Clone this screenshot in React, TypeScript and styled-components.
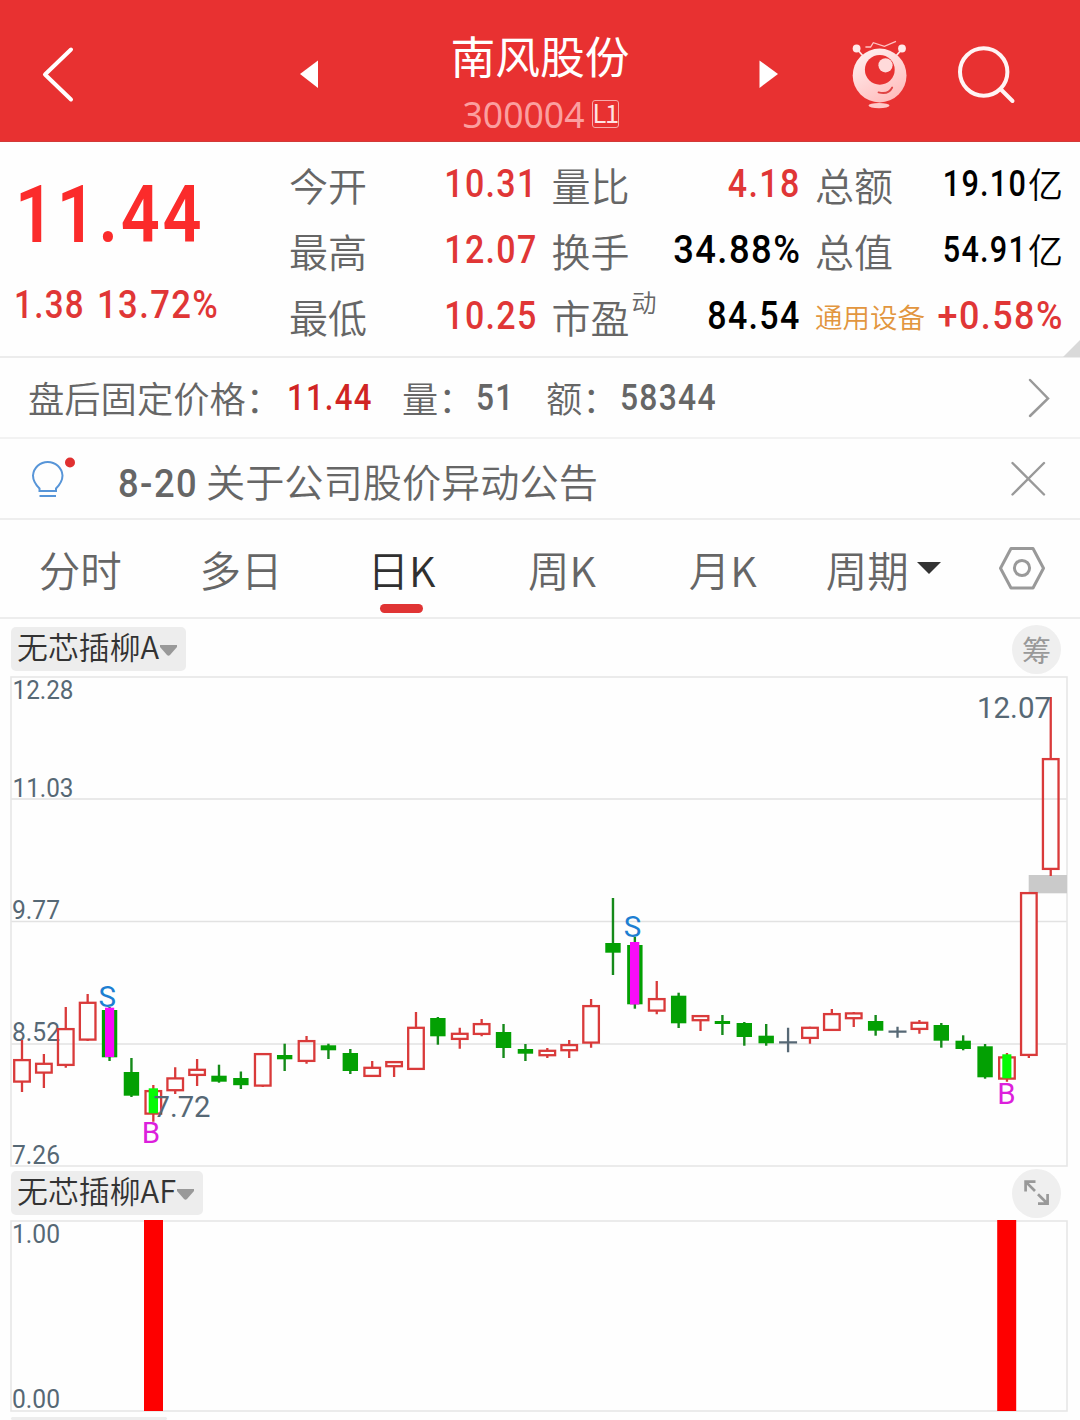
import React from "react";
import styled, { createGlobalStyle } from "styled-components";

const CJK = `"Noto Sans CJK SC", "Noto Sans", sans-serif`;
const DIGITS = `Roboto, "Noto Sans CJK SC", sans-serif`;
const RED = "#e03636";
const GREY = "#666666";
const SLATE = "#566875";

const GlobalStyle = createGlobalStyle`
  * { box-sizing: border-box; }
  body { margin: 0; background: #fff; font-family: ${CJK}; font-weight: 350; }
`;

const Page = styled.main`
  width: 1080px;
  height: 1420px;
  overflow: hidden;
  display: flex;
  flex-direction: column;
  background: #fefefe;
  white-space: nowrap;
`;

/* Condensed digits, squeezed towards one edge */
const Num = styled.span<{ $size: number; $color: string; $end?: boolean; $weight?: number; $k?: number }>`
  display: inline-block;
  font-family: ${DIGITS};
  font-weight: ${(p) => p.$weight ?? 500};
  font-size: ${(p) => p.$size}px;
  line-height: 1;
  letter-spacing: 0.04em;
  margin-right: ${(p) => (p.$end ? "-0.5px" : "0")};
  color: ${(p) => p.$color};
  transform: scaleX(${(p) => p.$k ?? 0.86});
  transform-origin: ${(p) => (p.$end ? "right" : "left")} center;
`;

/* ---------- header ---------- */
const Header = styled.header`
  height: 142px;
  flex: none;
  display: grid;
  grid-template-columns: 290px 500px 290px;
  background: #e83131;
  border-bottom: 1px solid #d23a38;
`;
const HeaderSide = styled.div`
  display: flex;
`;
const HeaderTools = styled.div`
  display: flex;
  align-items: flex-start;
  gap: 44px;
  padding: 36px 0 0 59px;
`;
const TitleArea = styled.div`
  display: flex;
  justify-content: space-between;
`;
const TitleBlock = styled.div`
  display: flex;
  flex-direction: column;
  align-items: center;
`;
const StockName = styled.h1`
  margin: 22px 0 0;
  font-size: 44.8px;
  line-height: 66px;
  font-weight: 400;
  color: #fff;
`;
const CodeLine = styled.div`
  display: flex;
  align-items: center;
  gap: 7px;
  margin: 7px 0 0 1px;
  height: 38px;
  font-family: "Noto Sans", sans-serif;
  font-weight: 400;
  font-size: 35.6px;
  line-height: 38px;
  color: #fb9f9f;
`;
const LevelTag = styled.span`
  width: 27px;
  height: 28px;
  border: 1.5px solid #f7a9a9;
  border-radius: 3px;
  display: flex;
  align-items: center;
  justify-content: center;
  padding-bottom: 5px;
  font-family: "Noto Sans CJK SC", sans-serif;
  font-size: 25.5px;
  line-height: 22px;
  letter-spacing: -1.5px;
  color: #ffe3e3;
`;

/* ---------- quote ---------- */
const Quote = styled.section`
  height: 216px;
  flex: none;
  position: relative;
  display: flex;
  border-bottom: 2px solid #ececec;
`;
const PriceBlock = styled.div`
  width: 289px;
  display: flex;
  flex-direction: column;
`;
const BigPrice = styled.div`
  height: 80px;
  padding-left: 15px;
  margin-top: 33px;
`;
const Change = styled.div`
  display: grid;
  grid-template-columns: 83px 1fr;
  padding-left: 14px;
  margin-top: 31px;
`;
const Stats = styled.div`
  width: 774px;
  padding-top: 9px;
  display: grid;
  grid-template-columns: 248px 249px 248px;
  grid-auto-rows: 66px;
  column-gap: 14.5px;
`;
const Stat = styled.div`
  display: flex;
  justify-content: space-between;
  align-items: center;
`;
const StatLabel = styled.span<{ $sector?: boolean }>`
  display: flex;
  margin-top: -1px;
  font-size: ${(p) => (p.$sector ? 27.5 : 39)}px;
  line-height: 60px;
  color: ${(p) => (p.$sector ? "#e2963f" : GREY)};
`;
const Dynamic = styled.sup`
  font-size: 25px;
  line-height: 30px;
  margin-left: 2px;
`;
const Amount = styled.span`
  display: flex;
  align-items: center;
  color: #000;
`;
const Unit = styled.span`
  margin-left: 1px;
  font-size: 35px;
  line-height: 50px;
  margin-top: -3px;
`;
const Corner = styled.svg`
  position: absolute;
  right: 0;
  bottom: -1px;
`;

/* ---------- info rows ---------- */
const Row = styled.section<{ $h: number; $line?: string }>`
  height: ${(p) => p.$h}px;
  flex: none;
  display: flex;
  align-items: center;
  border-bottom: 2px solid ${(p) => p.$line ?? "#f2f2f2"};
`;
const Slot = styled.span<{ $w: number; $drop?: number }>`
  width: ${(p) => p.$w}px;
  padding-top: ${(p) => p.$drop ?? 0}px;
  display: flex;
`;
const RowText = styled.span<{ $size: number; $w?: number; $shift?: number }>`
  width: ${(p) => (p.$w ? `${p.$w}px` : "auto")};
  flex: ${(p) => (p.$w ? "none" : "1")};
  margin-top: ${(p) => p.$shift ?? 0}px;
  font-size: ${(p) => p.$size}px;
  line-height: 60px;
  color: ${GREY};
`;

/* ---------- tabs ---------- */
const Tabs = styled.nav`
  height: 99px;
  flex: none;
  display: grid;
  grid-template-columns: repeat(6, 160.6px) 1fr;
  border-bottom: 2px solid #ededed;
`;
const Tab = styled.div<{ $active?: boolean }>`
  position: relative;
  display: flex;
  align-items: center;
  justify-content: center;
  gap: 8px;
  padding-top: 1px;
  font-size: 41.5px;
  line-height: 60px;
  color: ${(p) => (p.$active ? "#303030" : GREY)};
  > svg { margin-top: -3px; }
`;
const Underline = styled.i`
  position: absolute;
  left: 59px;
  bottom: 4px;
  width: 43px;
  height: 9px;
  border-radius: 5px;
  background: #e03434;
`;

/* ---------- charts ---------- */
const ChartBar = styled.div<{ $h: number; $top: number }>`
  height: ${(p) => p.$h}px;
  flex: none;
  display: flex;
  justify-content: space-between;
  align-items: flex-start;
  padding: ${(p) => p.$top}px 19px 0 11px;
`;
const Chip = styled.div`
  height: 44px;
  margin-top: 2px;
  padding: 0 9px 0 6px;
  border-radius: 5px;
  background: #ededed;
  display: flex;
  align-items: center;
  gap: 1px;
  font-size: 30.9px;
  line-height: 40px;
  color: #333;
  > svg { margin-top: 2px; }
`;
const ChipText = styled.span`
  margin-top: -6px;
`;
const Round = styled.div`
  width: 49px;
  height: 49px;
  border-radius: 50%;
  background: #efefef;
  color: #999;
  font-size: 29px;
  font-weight: 400;
  line-height: 44px;
  padding-bottom: 1px;
  display: flex;
  align-items: center;
  justify-content: center;
`;
const Plot = styled.svg`
  display: block;
  flex: none;
  overflow: visible;
`;
const NextChip = styled.div`
  margin: 4px 0 0 11px;
  width: 156px;
  height: 44px;
  border-radius: 5px;
  background: #ededed;
`;

/* kind, high, body top, body bottom, low */
type Candle = ["r" | "g" | "x", number, number, number, number];
const candles: Candle[] = [
  ["r", 1040, 1059, 1082.7, 1092], ["r", 1054, 1062.7, 1073.7, 1088],
  ["r", 1007, 1028, 1066, 1067.7], ["r", 994, 1001.7, 1040.7, 1041],
  ["g", 1007, 1010, 1057.3, 1061], ["g", 1058, 1072, 1095.7, 1097],
  ["r", 1085, 1090, 1114.7, 1121.7], ["r", 1067.3, 1077.3, 1091.3, 1094],
  ["r", 1059, 1068.7, 1076, 1086], ["g", 1064.7, 1075.7, 1081.7, 1082.7],
  ["g", 1071.5, 1078, 1085.2, 1089], ["r", 1053, 1053, 1086.7, 1087],
  ["g", 1043.7, 1055, 1059.3, 1071], ["r", 1036, 1040, 1062, 1063.7],
  ["g", 1043.7, 1045.3, 1050.3, 1059], ["g", 1049, 1053, 1071, 1074],
  ["r", 1061, 1066.7, 1077, 1077], ["r", 1061, 1061, 1067.3, 1077],
  ["r", 1012, 1026.7, 1070, 1070], ["g", 1017, 1018, 1036.3, 1044.7],
  ["r", 1027.7, 1032.7, 1040, 1048.7], ["r", 1019, 1023, 1035, 1036.3],
  ["g", 1024, 1032, 1048, 1058], ["g", 1044, 1049, 1053.7, 1061],
  ["r", 1048, 1049.7, 1056.3, 1058], ["r", 1040, 1044, 1051.3, 1058],
  ["r", 999, 1005, 1043.7, 1047.7], ["g", 898, 943, 952.7, 975],
  ["g", 936.7, 945, 1004.3, 1008.7], ["r", 981, 998, 1011.7, 1014.3],
  ["g", 992.7, 995.7, 1023.3, 1028], ["r", 1015, 1015, 1021.3, 1031],
  ["g", 1015, 1021, 1024, 1035], ["g", 1022, 1023, 1037, 1045.7],
  ["g", 1024, 1035.7, 1043.3, 1045.7], ["x", 1027.7, 1042.3, 1042.3, 1052.3],
  ["r", 1026.7, 1026.7, 1039, 1043.7], ["r", 1009, 1013, 1031, 1031],
  ["r", 1012, 1012.3, 1019.3, 1027], ["g", 1015, 1021, 1030.7, 1035.7],
  ["x", 1026.7, 1031.7, 1031.7, 1037.7], ["r", 1020, 1021.7, 1030, 1033.7],
  ["g", 1023, 1025, 1040.7, 1047.7], ["g", 1035.3, 1040.7, 1049, 1050.3],
  ["g", 1044, 1046.3, 1077.3, 1078.7], ["r", 1053, 1056.3, 1079.7, 1081.7],
  ["r", 892, 892, 1056, 1058], ["r", 697, 758, 870, 876],
];

function CandleMark({ c, i }: { c: Candle; i: number }) {
  const [kind, high, top, bottom, low] = c;
  const x = 22 + i * 21.888;
  if (kind === "x") {
    return <path d={`M${x} ${high}V${low}M${x - 9} ${top}H${x + 9}`} stroke={SLATE} strokeWidth={2.3} />;
  }
  if (kind === "g") {
    return (
      <g fill="#03a003">
        <rect x={x - 1.2} y={high} width={2.4} height={low - high} fill="#158a1a" />
        <rect x={x - 7.7} y={top} width={15.4} height={bottom - top} />
      </g>
    );
  }
  return (
    <g stroke="#d93a3a" strokeWidth={2.3} fill="none">
      <path d={`M${x} ${high}V${top + 1}M${x} ${bottom - 1}V${low}`} />
      <rect x={x - 7.8} y={top + 1.1} width={15.6} height={bottom - top - 2.2} />
    </g>
  );
}

type LabelProps = { x: number; y: number; w: number; size?: number; children: string };
const ChartLabel = ({ x, y, w, size = 25.6, children }: LabelProps) => (
  <text x={x} y={y} fontFamily="Roboto, sans-serif" fontSize={size} fontWeight={450}
    fill={SLATE} textLength={w} lengthAdjust="spacingAndGlyphs">{children}</text>
);
const Signal = ({ x, y, color, children }: { x: number; y: number; color: string; children: string }) => (
  <text x={x} y={y} fontFamily="Roboto, sans-serif" fontSize={29.5} fontWeight={400} fill={color} textAnchor="middle">{children}</text>
);

const Caret = () => (
  <svg width="17" height="11" viewBox="0 0 17 11"><path d="M0 0H17V2L10 10Q8.500 11.500 7 10L0 2Z" fill="#999" /></svg>
);

function Robot() {
  return (
    <svg width="62" height="76" viewBox="849 36 62 76" fill="none">
      <defs>
        <linearGradient id="body" x1="0" y1="0" x2="0.6" y2="1">
          <stop offset="0" stopColor="#fff4f4" /><stop offset="1" stopColor="#ffbfbf" />
        </linearGradient>
      </defs>
      <path d="M865.400 47H870.600L873.300 42.700L884.400 46.300L896 41.300" stroke="#ffc4c4" strokeWidth="1.300" />
      <path d="M857 49L863 56M902 49L896 56" stroke="#ffe2e2" strokeWidth="1.800" />
      <circle cx="856.600" cy="48.500" r="3.900" fill="#ffeaea" /><circle cx="902" cy="48.500" r="3.900" fill="#ffeaea" />
      <circle cx="879.600" cy="75.500" r="26.900" fill="url(#body)" />
      <circle cx="879.800" cy="69.800" r="14.900" fill="#e83131" />
      <circle cx="885.500" cy="65.300" r="7.100" fill="#ffdada" />
      <path d="M878.500 92.300Q888.500 95 892.200 87.500" stroke="#e04444" strokeWidth="1.800" strokeLinecap="round" />
      <ellipse cx="879" cy="105.600" rx="10.500" ry="2.600" fill="#ffc9c9" />
    </svg>
  );
}

export default function App() {
  return (
    <Page>
      <GlobalStyle />
      <Header>
        <HeaderSide>
          <svg width="90" height="142" fill="none"><path d="M71 49.500L45 74.500L71 99.500" stroke="#fff" strokeWidth="4" strokeLinecap="round" strokeLinejoin="round" /></svg>
        </HeaderSide>
        <TitleArea>
          <svg width="40" height="142"><path d="M28 60.500V88L10 74Z" fill="#fff" /></svg>
          <TitleBlock>
            <StockName>南风股份</StockName>
            <CodeLine>300004<LevelTag>L1</LevelTag></CodeLine>
          </TitleBlock>
          <svg width="40" height="142"><path d="M9.500 60.500V88L28 74Z" fill="#fff" /></svg>
        </TitleArea>
        <HeaderTools>
          <Robot />
          <svg width="64" height="76" viewBox="955 36 64 76" fill="none" stroke="#fff4f4" strokeWidth="4" strokeLinecap="round">
            <circle cx="983.700" cy="72" r="23.700" /><path d="M1000.500 89L1012.500 101" />
          </svg>
        </HeaderTools>
      </Header>

      <Quote>
        <PriceBlock>
          <BigPrice><Num $size={79.5} $color="#fb2b2b" $weight={600} $k={0.86}>11.44</Num></BigPrice>
          <Change>
            <Num $size={38.5} $color={RED} $k={0.86}>1.38</Num>
            <Num $size={38.5} $color={RED} $k={0.9}>13.72%</Num>
          </Change>
        </PriceBlock>
        <Stats>
          <Stat><StatLabel>今开</StatLabel><Num $size={39.5} $color={RED} $end>10.31</Num></Stat>
          <Stat><StatLabel>量比</StatLabel><Num $size={39.5} $color={RED} $end>4.18</Num></Stat>
          <Stat><StatLabel>总额</StatLabel><Amount><Num $size={36} $color="#000" $end $k={0.85}>19.10</Num><Unit>亿</Unit></Amount></Stat>
          <Stat><StatLabel>最高</StatLabel><Num $size={39.5} $color={RED} $end>12.07</Num></Stat>
          <Stat><StatLabel>换手</StatLabel><Num $size={39.5} $color="#000" $end $k={0.92}>34.88%</Num></Stat>
          <Stat><StatLabel>总值</StatLabel><Amount><Num $size={36} $color="#000" $end $k={0.85}>54.91</Num><Unit>亿</Unit></Amount></Stat>
          <Stat><StatLabel>最低</StatLabel><Num $size={39.5} $color={RED} $end>10.25</Num></Stat>
          <Stat><StatLabel>市盈<Dynamic>动</Dynamic></StatLabel><Num $size={39.5} $color="#000" $end>84.54</Num></Stat>
          <Stat><StatLabel $sector>通用设备</StatLabel><Num $size={39.5} $color={RED} $end $k={0.91}>+0.58%</Num></Stat>
        </Stats>
        <Corner width="17" height="17"><path d="M17 0V17H0Z" fill="#d9d9d9" /></Corner>
      </Quote>

      <Row $h={81}>
        <Slot $w={28} />
        <RowText $size={36.3} $w={259} $shift={-2}>盘后固定价格：</RowText>
        <Slot $w={115} $drop={1}><Num $size={36.8} $color="#d02424" $k={0.845}>11.44</Num></Slot>
        <RowText $size={36.2} $w={74} $shift={-2}>量：</RowText>
        <Slot $w={70} $drop={1}><Num $size={36.8} $color={GREY}>51</Num></Slot>
        <RowText $size={36.2} $w={74} $shift={-2}>额：</RowText>
        <Slot $w={405} $drop={1}><Num $size={36.8} $color={GREY} $k={0.865}>58344</Num></Slot>
        <svg width="26" height="42" fill="none"><path d="M5 3L23 21.500L5 39" stroke="#999" strokeWidth="2.500" strokeLinecap="round" /></svg>
      </Row>

      <Row $h={81} $line="#eeeeee">
        <Slot $w={118}>
          <svg width="117" height="60" viewBox="0 449 117 60" fill="none">
            <path d="M39.500 491V488.500C36 485 33 481 33 475.500A14.800 14.800 0 0 1 62.500 475.500C62.500 481 59.500 485 56 488.500V491ZM39.500 496H56" stroke="#5795d8" strokeWidth="2" />
            <circle cx="70" cy="462.500" r="5" fill="#e03030" />
          </svg>
        </Slot>
        <Slot $w={88} $drop={10}><Num $size={39.5} $color={GREY} $k={0.92}>8-20</Num></Slot>
        <RowText $size={39.2} $shift={2}>关于公司股价异动公告</RowText>
        <svg width="71" height="36" viewBox="1009 461 71 36"><path d="M1012.500 463L1044 494.500M1044 463L1012.500 494.500" stroke="#999" strokeWidth="2.400" strokeLinecap="round" /></svg>
      </Row>

      <Tabs>
        <Tab>分时</Tab>
        <Tab>多日</Tab>
        <Tab $active>日K<Underline /></Tab>
        <Tab>周K</Tab>
        <Tab>月K</Tab>
        <Tab>周期<svg width="24" height="12"><path d="M0 0H24L12 12Z" fill="#333" /></svg></Tab>
        <Tab>
          <svg width="50" height="46" viewBox="997.500 545 50 46" fill="none" stroke="#999" strokeWidth="3" strokeLinejoin="round">
            <path d="M1011.500 548.500H1033.500L1044 568.200L1033.500 588H1011.500L1001 568.200Z" /><circle cx="1022.500" cy="568" r="7.600" />
          </svg>
        </Tab>
      </Tabs>

      <ChartBar $h={57} $top={6}>
        <Chip><ChipText>无芯插柳A</ChipText><Caret /></Chip>
        <Round>筹</Round>
      </ChartBar>
      <Plot width="1080" height="492" viewBox="0 676 1080 492">
        <path d="M11 799H1067M11 921.500H1067M11 1044H1067" stroke="#e2e2e2" strokeWidth="1.300" />
        <rect x="11" y="677" width="1056" height="489" fill="none" stroke="#e6e6e6" strokeWidth="1.600" />
        <ChartLabel x={12.5} y={699.3} w={61}>12.28</ChartLabel>
        <ChartLabel x={12.5} y={796.5} w={61}>11.03</ChartLabel>
        <ChartLabel x={12} y={919} w={48}>9.77</ChartLabel>
        <ChartLabel x={12} y={1041} w={48}>8.52</ChartLabel>
        <ChartLabel x={12} y={1164} w={48}>7.26</ChartLabel>
        <rect x="1028.700" y="875" width="38.300" height="18.300" fill="#cacaca" />
        <rect x="1021" y="893" width="15" height="162" fill="#fefefe" />
        {candles.map((c, i) => <CandleMark key={i} c={c} i={i} />)}
        <rect x="105" y="1007.700" width="9.200" height="49.300" fill="#f80cf8" />
        <rect x="630" y="942" width="9.300" height="62.500" fill="#f80cf8" />
        <rect x="148.700" y="1088.300" width="9.300" height="25" fill="#05fa05" />
        <rect x="1002.300" y="1054.300" width="9.100" height="24" fill="#05fa05" />
        <ChartLabel x={977} y={718} w={74} size={30}>12.07</ChartLabel>
        <ChartLabel x={153.5} y={1117} w={57} size={30}>7.72</ChartLabel>
        <Signal x={107.2} y={1007} color="#1d7fd2">S</Signal>
        <Signal x={632.5} y={936.5} color="#1d7fd2">S</Signal>
        <Signal x={151} y={1142.5} color="#dc1fdc">B</Signal>
        <Signal x={1006.5} y={1103.7} color="#dc1fdc">B</Signal>
      </Plot>

      <ChartBar $h={51} $top={1}>
        <Chip><ChipText>无芯插柳AF</ChipText><Caret /></Chip>
        <Round>
          <svg width="28" height="28" viewBox="1023 1180 28 28" fill="none" stroke="#999" strokeWidth="2.700">
            <path d="M1035.500 1182.600H1025.600V1192.500M1025.600 1182.600L1035 1192M1047.600 1195V1204.700H1038M1047.600 1204.700L1038 1195.200" />
          </svg>
        </Round>
      </ChartBar>
      <Plot width="1080" height="194" viewBox="0 1219 1080 194">
        <rect x="11" y="1221" width="1056" height="190" fill="none" stroke="#e6e6e6" strokeWidth="1.600" />
        <ChartLabel x={12} y={1243} w={48}>1.00</ChartLabel>
        <ChartLabel x={12} y={1408} w={48}>0.00</ChartLabel>
        <rect x="144" y="1220" width="19" height="191" fill="#fe0000" />
        <rect x="997.200" y="1220" width="19" height="191" fill="#fe0000" />
      </Plot>
      <NextChip />
    </Page>
  );
}
